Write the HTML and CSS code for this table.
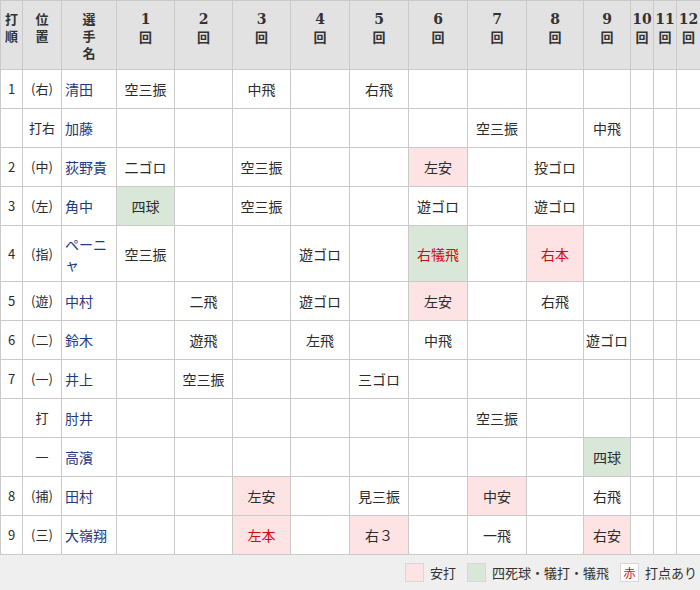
FILE: index.html
```html
<!DOCTYPE html>
<html lang="ja">
<head>
<meta charset="utf-8">
<link rel="stylesheet" href="styles.css">
</head>
<body>
<table class="score">
<colgroup>
<col class="c-no"><col class="c-pos"><col class="c-name">
<col class="c-58"><col class="c-58"><col class="c-58"><col class="c-59"><col class="c-59"><col class="c-59"><col class="c-59"><col class="c-57"><col class="c-47"><col class="c-23"><col class="c-23"><col class="c-24">
</colgroup>
<thead>
<tr class="head">
<th>打<br>順</th><th>位<br>置</th><th>選<br>手<br>名</th>
<th><span class="d">1</span><br>回</th><th><span class="d">2</span><br>回</th><th><span class="d">3</span><br>回</th><th><span class="d">4</span><br>回</th><th><span class="d">5</span><br>回</th><th><span class="d">6</span><br>回</th><th><span class="d">7</span><br>回</th><th><span class="d">8</span><br>回</th><th><span class="d">9</span><br>回</th><th><span class="d">10</span><br>回</th><th><span class="d">11</span><br>回</th><th><span class="d">12</span><br>回</th>
</tr>
</thead>
<tbody>
<tr><td class="no">1</td><td class="pos">(右)</td><td class="name">清田</td><td>空三振</td><td></td><td>中飛</td><td></td><td>右飛</td><td></td><td></td><td></td><td></td><td></td><td></td><td></td></tr>
<tr><td class="no"></td><td class="pos">打右</td><td class="name">加藤</td><td></td><td></td><td></td><td></td><td></td><td></td><td>空三振</td><td></td><td>中飛</td><td></td><td></td><td></td></tr>
<tr><td class="no">2</td><td class="pos">(中)</td><td class="name">荻野貴</td><td>二ゴロ</td><td></td><td>空三振</td><td></td><td></td><td class="hit">左安</td><td></td><td>投ゴロ</td><td></td><td></td><td></td><td></td></tr>
<tr><td class="no">3</td><td class="pos">(左)</td><td class="name">角中</td><td class="walk">四球</td><td></td><td>空三振</td><td></td><td></td><td>遊ゴロ</td><td></td><td>遊ゴロ</td><td></td><td></td><td></td><td></td></tr>
<tr class="tall"><td class="no">4</td><td class="pos">(指)</td><td class="name">ペーニャ</td><td>空三振</td><td></td><td></td><td>遊ゴロ</td><td></td><td class="walk rbi">右犠飛</td><td></td><td class="hit rbi">右本</td><td></td><td></td><td></td><td></td></tr>
<tr><td class="no">5</td><td class="pos">(遊)</td><td class="name">中村</td><td></td><td>二飛</td><td></td><td>遊ゴロ</td><td></td><td class="hit">左安</td><td></td><td>右飛</td><td></td><td></td><td></td><td></td></tr>
<tr><td class="no">6</td><td class="pos">(二)</td><td class="name">鈴木</td><td></td><td>遊飛</td><td></td><td>左飛</td><td></td><td>中飛</td><td></td><td></td><td>遊ゴロ</td><td></td><td></td><td></td></tr>
<tr><td class="no">7</td><td class="pos">(一)</td><td class="name">井上</td><td></td><td>空三振</td><td></td><td></td><td>三ゴロ</td><td></td><td></td><td></td><td></td><td></td><td></td><td></td></tr>
<tr><td class="no"></td><td class="pos">打</td><td class="name">肘井</td><td></td><td></td><td></td><td></td><td></td><td></td><td>空三振</td><td></td><td></td><td></td><td></td><td></td></tr>
<tr><td class="no"></td><td class="pos">一</td><td class="name">高濱</td><td></td><td></td><td></td><td></td><td></td><td></td><td></td><td></td><td class="walk">四球</td><td></td><td></td><td></td></tr>
<tr><td class="no">8</td><td class="pos">(捕)</td><td class="name">田村</td><td></td><td></td><td class="hit">左安</td><td></td><td>見三振</td><td></td><td class="hit">中安</td><td></td><td>右飛</td><td></td><td></td><td></td></tr>
<tr><td class="no">9</td><td class="pos">(三)</td><td class="name">大嶺翔</td><td></td><td></td><td class="hit rbi">左本</td><td></td><td class="hit">右３</td><td></td><td>一飛</td><td></td><td class="hit">右安</td><td></td><td></td><td></td></tr>
</tbody>
</table>
<div class="legend">
<span class="box box-hit"></span><span class="lt">安打</span>
<span class="box box-walk"></span><span class="lt">四死球・犠打・犠飛</span>
<span class="box box-rbi">赤</span><span class="lt">打点あり</span>
</div>
</body>
</html>
```
FILE: styles.css
```css
html, body {
  margin: 0;
  padding: 0;
  background: #efefef;
}
body {
  width: 700px;
  font-family: "Noto Sans CJK JP", sans-serif;
  color: #2b2b2b;
}
.score {
  width: 700px;
  table-layout: fixed;
  border-collapse: collapse;
  background: #fff;
  font-size: 14px;
}
.c-no { width: 22px; }
.c-pos { width: 39px; }
.c-name { width: 55px; }
.c-58 { width: 58px; }
.c-59 { width: 59px; }
.c-57 { width: 57px; }
.c-47 { width: 47px; }
.c-23 { width: 23px; }
.c-24 { width: 24px; }
.score th, .score td {
  border: 1px solid #cacaca;
  padding: 0;
  text-align: center;
}
.head {
  height: 69px;
}
.head th {
  background: #e2e2e2;
  vertical-align: top;
  padding-top: 9px;
  font-size: 13px;
  line-height: 17px;
  font-weight: bold;
  color: #333;
}
.head .d {
  font-family: "DejaVu Serif", "Liberation Serif", serif;
  font-size: 14px;
  font-weight: bold;
}
.score tbody tr {
  height: 39px;
}
.score tbody tr.tall {
  height: 56px;
}
.score td {
  line-height: 20px;
  vertical-align: middle;
}
.score td.no {
  font-size: 13px;
}
.score td.pos {
  font-size: 13px;
}
.score td.name {
  text-align: left;
  padding: 0 2px 0 3px;
  color: #1d3a82;
}
.score td.hit {
  background: #fde3e3;
}
.score td.walk {
  background: #d9e7d9;
}
.score td.rbi {
  color: #d20a0a;
}
.legend {
  display: flex;
  justify-content: flex-end;
  align-items: center;
  height: 35px;
  padding-right: 3px;
  font-size: 13px;
  color: #333;
}
.box {
  box-sizing: border-box;
  width: 19px;
  height: 19px;
  border: 1px solid #d8d8d8;
  margin-right: 6px;
  display: flex;
  align-items: center;
  justify-content: center;
  font-size: 12px;
}
.box-hit { background: #fde3e3; }
.box-walk { background: #d9e7d9; }
.box-rbi { background: #fff; color: #d20a0a; }
.lt {
  margin-right: 11px;
}
.lt:last-child {
  margin-right: 0;
}
```
